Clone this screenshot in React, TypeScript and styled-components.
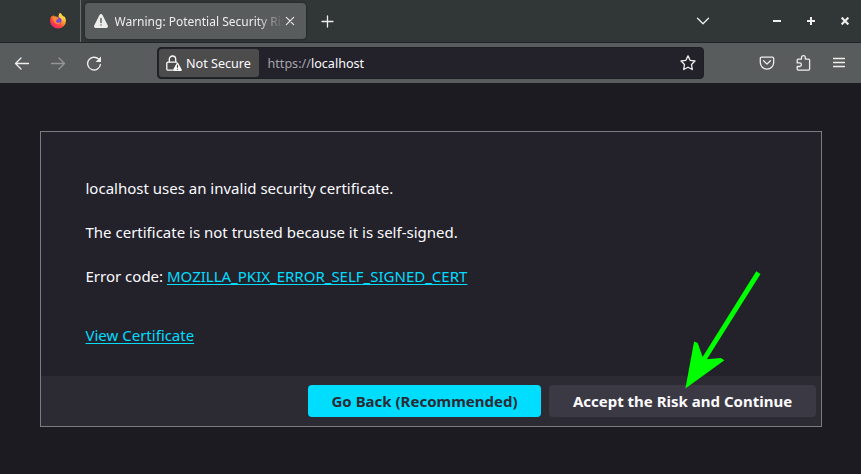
import React from 'react';
import styled, { createGlobalStyle } from 'styled-components';

const GlobalStyle = createGlobalStyle`
  * { box-sizing: border-box; }
  html, body, #root { height: 100%; margin: 0; }
  body { overflow: hidden; background: #1c1b22; font-family: "Noto Sans", sans-serif; }
  svg { display: block; flex: none; }
`;

const Browser = styled.div`
  height: 474px;
  display: flex;
  flex-direction: column;
  color: #fbfbfe;
`;

const TabBar = styled.header`
  height: 43px;
  display: flex;
  align-items: stretch;
  background: #313736;
  border-bottom: 1px solid #202426;
`;

const PinnedTab = styled.div`
  width: 81px;
  padding: 12px 0 0 50px;
  border-right: 1px solid #686c6c;
`;

const Tab = styled.div`
  width: 221px;
  height: 36px;
  margin: 3px 0 0 4px;
  padding: 0 11px 0 8px;
  display: flex;
  align-items: center;
  border-radius: 4px;
  background: #585c5c;
  box-shadow: 0 0 3px rgba(0, 0, 0, 0.45);
  color: #eeeeec;
`;

const TabTitle = styled.span`
  width: 169.5px;
  margin-left: 5.5px;
  margin-right: 1px;
  overflow: hidden;
  white-space: nowrap;
  font-size: 12px;
  line-height: 20px;
  padding-top: 1px;
  mask-image: linear-gradient(to left, transparent, #000 28px);
`;

const BarButton = styled.button<{ $width: number; $dim?: boolean }>`
  width: ${({ $width }) => $width}px;
  padding: 0;
  border: 0;
  background: none;
  display: flex;
  align-items: center;
  justify-content: center;
  color: #eeeeec;
  opacity: ${({ $dim }) => ($dim ? 0.4 : 1)};
`;

const Spacer = styled.div`
  flex: 1;
`;

const WindowControls = styled.div`
  display: flex;
  margin-left: 37px;
  margin-right: -1px;
`;

const NavBar = styled.nav`
  height: 40px;
  display: flex;
  align-items: center;
  padding-left: 4px;
  padding-right: 4px;
  background: #585c5c;
`;

const AddressBar = styled.div`
  width: 547px;
  height: 32px;
  margin-left: 45px;
  display: flex;
  align-items: center;
  border: 1px solid #1d1f22;
  border-radius: 4px;
  background: #23222b;
  font-size: 12.6px;
`;

const Identity = styled.div`
  width: 100px;
  height: 28px;
  margin-left: 1px;
  padding-left: 7px;
  display: flex;
  align-items: center;
  gap: 4px;
  border-radius: 3px;
  background: #4c4c4d;
  white-space: nowrap;
`;

const Address = styled.span`
  flex: 1;
  margin-left: 8.5px;
`;

const Scheme = styled.span`
  color: #a4a4a9;
`;

const Page = styled.main`
  flex: 1;
  padding: 48px 39px 47px 40px;
  background: #1c1b22;
`;

const ErrorPanel = styled.section`
  height: 296px;
  display: flex;
  flex-direction: column;
  border: 1px solid #7c7b82;
  background: #23222b;
  font-size: 15px;
  line-height: 22px;
`;

const Details = styled.div`
  flex: 1;
  padding: 45px 44px 0 44.5px;
`;

const Paragraph = styled.p<{ $gap?: number }>`
  margin: 0 0 ${({ $gap = 22 }) => $gap}px;
`;

const Link = styled.a`
  color: #00ddff;
  text-decoration: underline;
  text-decoration-thickness: 1px;
  text-underline-offset: 2px;
`;

const Actions = styled.footer`
  height: 50px;
  padding: 9px 5px 9px;
  display: flex;
  justify-content: flex-end;
  gap: 8px;
  background: #2c2b34;
`;

const ActionButton = styled.button<{ $primary?: boolean }>`
  width: ${({ $primary }) => ($primary ? 233 : 267)}px;
  height: 32px;
  padding: 0;
  border: 0;
  border-radius: 4px;
  background: ${({ $primary }) => ($primary ? '#00ddff' : '#3b3943')};
  color: ${({ $primary }) => ($primary ? '#2b2a33' : '#fbfbfe')};
  font: 700 15px/32px "Noto Sans", sans-serif;
  white-space: nowrap;
`;

const Pointer = styled.svg`
  position: absolute;
  left: 680px;
  top: 266px;
  pointer-events: none;
`;

const line = { fill: 'none', stroke: 'currentColor', strokeLinecap: 'round', strokeLinejoin: 'round' } as const;

const FirefoxLogo = () => (
  <svg width="16" height="17" viewBox="0 0 16 17">
    <defs>
      <linearGradient id="flame" x1="0.85" y1="0.1" x2="0.2" y2="0.95">
        <stop offset="0" stopColor="#fff044" />
        <stop offset="0.35" stopColor="#ffa22b" />
        <stop offset="0.65" stopColor="#ff4b3c" />
        <stop offset="1" stopColor="#e91e78" />
      </linearGradient>
    </defs>
    <path fill="url(#flame)" d="M10 1c1.1.7 1.7 1.5 2.2 2.4 1.1.5 1.5 1.2 1.8 1.8l.3-1c1.2 1.5 1.6 3 1.6 4.7a7.9 7.7 0 0 1-15.8 0c0-2.2.6-3.9 1.8-5.2l.2 1.1 1.3-1.9.5 1.7c1-.3 1.9-.2 2.7.1L8.7 5c-.1-1.6.2-3 1.3-4z" />
    <circle cx="8.3" cy="8.5" r="3.2" fill="#7847db" />
    <path fill="#ff8a28" d="M2.7 5.1c1.5-.9 3.1-.7 4.1.6l1.8.3c.1.7-.8 1-1.7 1.5-.2.9-.9 1.1-.9 1.8 0 1 1 1.7 2.2 1.5 1-.1 1.5-.7 2.2-.5-.5 1.4-1.8 2-3.2 1.8-2.7-.3-4.5-3.4-4.5-7z" />
    <path fill="#ffd43b" d="M10 1c1.1.7 1.7 1.5 2.2 2.4 2 1.2 2.8 3.1 2.4 5-.4-1.5-1.2-2-1.7-2.4.3 1.5 0 2.3-.5 3C12.8 6 8.5 5.8 8.7 4c.1-1.3.5-2.3 1.3-3z" />
  </svg>
);

const WarningIcon = () => (
  <svg width="16" height="16" viewBox="0 0 16 16">
    <path fill="currentColor" d="M6.5 2.1c.7-1.4 2.3-1.4 3 0l5.3 10.3c.6 1.2-.2 2.6-1.5 2.6H2.7c-1.3 0-2.1-1.4-1.5-2.6z" />
    <path stroke="#4d5151" strokeWidth="1.3" strokeLinecap="round" d="M8 5.4v4.2M8 12v.1" />
  </svg>
);

const InsecureLock = () => (
  <svg width="16" height="16" viewBox="0 0 16 16">
    <path {...line} strokeWidth="1.3" d="M3.3 7V4.2a3.2 3.2 0 0 1 6.4 0V7M6.4 15.1H2a1.2 1.2 0 0 1-1.2-1.2V8.3c0-.7.5-1.2 1.2-1.2h8.7" />
    <path fill="currentColor" d="M10.6 8.2c.4-.8 1.3-.8 1.7 0l3.4 6.2c.4.8-.1 1.6-.9 1.6H8.2c-.9 0-1.4-.8-1-1.6z" />
    <path stroke="#4c4c4d" strokeWidth="1.2" d="M11.5 9.7v3M11.5 13.7v1.1" />
  </svg>
);

export default function App() {
  return (
    <Browser>
      <GlobalStyle />
      <TabBar>
        <PinnedTab><FirefoxLogo /></PinnedTab>
        <Tab>
          <WarningIcon />
          <TabTitle>Warning: Potential Security Risk Ahead</TabTitle>
          <svg width="10" height="10" viewBox="0 0 10 10"><path {...line} strokeWidth="1.1" d="M1.3 1.3l7.4 7.4M8.7 1.3L1.3 8.7" /></svg>
        </Tab>
        <BarButton $width={43} aria-label="New tab">
          <svg width="13" height="13" viewBox="0 0 13 13"><path {...line} strokeWidth="1.3" d="M6.5 1v11M1 6.5h11" /></svg>
        </BarButton>
        <Spacer />
        <BarButton $width={40} aria-label="List all tabs">
          <svg width="14" height="14" viewBox="0 0 14 14"><path {...line} strokeWidth="1.3" d="M1.5 4.2L7 9.7l5.5-5.5" /></svg>
        </BarButton>
        <WindowControls>
          <BarButton $width={34} aria-label="Minimize">
            <svg width="8" height="8" viewBox="0 0 8 8"><path stroke="currentColor" strokeWidth="2" d="M0 4h8" /></svg>
          </BarButton>
          <BarButton $width={34} aria-label="Maximize">
            <svg width="8" height="8" viewBox="0 0 8 8"><path stroke="currentColor" strokeWidth="2" d="M0 4h8M4 0v8" /></svg>
          </BarButton>
          <BarButton $width={34} aria-label="Close">
            <svg width="8" height="8" viewBox="0 0 8 8"><path stroke="currentColor" strokeWidth="2.2" d="M.6.6l6.8 6.8M7.4.6L.6 7.4" /></svg>
          </BarButton>
        </WindowControls>
      </TabBar>
      <NavBar>
        <BarButton $width={36} aria-label="Back">
          <svg width="16" height="16" viewBox="0 0 16 16"><path {...line} strokeWidth="1.3" d="M14.5 8.5H1.5M7 3L1.5 8.5 7 14" /></svg>
        </BarButton>
        <BarButton $width={36} $dim aria-label="Forward">
          <svg width="16" height="16" viewBox="0 0 16 16"><path {...line} strokeWidth="1.3" d="M1.5 8.5h13M9 3l5.5 5.5L9 14" /></svg>
        </BarButton>
        <BarButton $width={36} aria-label="Reload">
          <svg width="16" height="16" viewBox="0 0 16 16">
            <path {...line} strokeWidth="1.4" d="M12.6 4.1a6.4 6.4 0 1 0 1.8 5.4" />
            <path fill="currentColor" d="M15 1.6v4.8c0 .4-.2.6-.6.6H9.6z" />
          </svg>
        </BarButton>
        <AddressBar>
          <Identity><InsecureLock />Not Secure</Identity>
          <Address><Scheme>https://</Scheme>localhost</Address>
          <BarButton $width={30} aria-label="Bookmark">
            <svg width="16" height="16" viewBox="0 0 16 16"><path {...line} strokeWidth="1.3" d="M8 .9l2.1 4.4 4.9.7-3.5 3.5.8 5L8 12.2l-4.3 2.3.8-5L1 6l4.9-.7z" /></svg>
          </BarButton>
        </AddressBar>
        <Spacer />
        <BarButton $width={36} aria-label="Save to Pocket">
          <svg width="16" height="16" viewBox="0 0 16 16"><path {...line} strokeWidth="1.3" d="M2.6 2.1h10.8c.8 0 1.3.5 1.3 1.3v4.2a6.7 6.5 0 0 1-13.4 0V3.4c0-.8.5-1.3 1.3-1.3zM4.6 5.8L8 9.1l3.4-3.3" /></svg>
        </BarButton>
        <BarButton $width={36} aria-label="Extensions">
          <svg width="16" height="16" viewBox="0 0 16 16"><path {...line} strokeWidth="1.3" d="M2.2 6.8V5.1c0-.6.4-1 1-1h3.3V2.6a1.9 1.9 0 0 1 3.8 0v1.5h3.3c.6 0 1 .4 1 1v9c0 .6-.4 1-1 1H3.2c-.6 0-1-.4-1-1v-2.6h2.4a1.8 1.8 0 0 0 0-3.6H2.2z" /></svg>
        </BarButton>
        <BarButton $width={36} aria-label="Open menu">
          <svg width="12" height="12" viewBox="0 0 12 12"><path {...line} strokeWidth="1.3" d="M.5 1.5h11M.5 5.5h11M.5 9.5h11" /></svg>
        </BarButton>
      </NavBar>
      <Page>
        <ErrorPanel>
          <Details>
            <Paragraph>localhost uses an invalid security certificate.</Paragraph>
            <Paragraph>The certificate is not trusted because it is self-signed.</Paragraph>
            <Paragraph $gap={37}>Error code: <Link>MOZILLA_PKIX_ERROR_SELF_SIGNED_CERT</Link></Paragraph>
            <Paragraph $gap={0}><Link>View Certificate</Link></Paragraph>
          </Details>
          <Actions>
            <ActionButton $primary>Go Back (Recommended)</ActionButton>
            <ActionButton>Accept the Risk and Continue</ActionButton>
          </Actions>
        </ErrorPanel>
      </Page>
      <Pointer width="84" height="126" viewBox="0 0 84 126">
        <path fill="#00ff00" d="M76.3 5.3L80.5 8 26.9 93.2 40.8 92 44.4 94.3 5.4 122.6 14.1 75.5 17.7 77 22.6 91z" />
      </Pointer>
    </Browser>
  );
}
